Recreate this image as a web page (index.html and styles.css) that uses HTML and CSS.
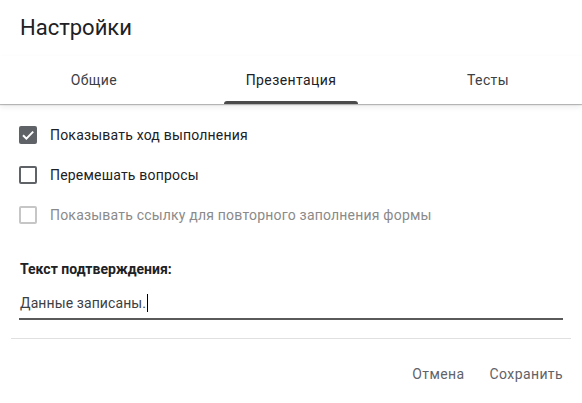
FILE: index.html
```html
<!DOCTYPE html>
<html lang="ru">
<head>
<meta charset="utf-8">
<title>Настройки</title>
<link rel="stylesheet" href="styles.css">
</head>
<body>
<div class="dialog">
  <div class="header">
    <h1 class="title">Настройки</h1>
  </div>
  <div class="tabs">
    <div class="tab"><div class="tab-inner"><span class="tab-label">Общие</span><span class="tab-ind"></span></div></div>
    <div class="tab active"><div class="tab-inner"><span class="tab-label">Презентация</span><span class="tab-ind"></span></div></div>
    <div class="tab"><div class="tab-inner"><span class="tab-label">Тесты</span><span class="tab-ind"></span></div></div>
  </div>
  <div class="content">
    <div class="row">
      <span class="cb checked"><svg viewBox="0 0 18 18" width="18" height="18"><path d="M4 9.2 L7.4 12.6 L14.2 5.6" fill="none" stroke="#fff" stroke-width="2"/></svg></span>
      <span class="row-label">Показывать ход выполнения</span>
    </div>
    <div class="row">
      <span class="cb"></span>
      <span class="row-label">Перемешать вопросы</span>
    </div>
    <div class="row disabled">
      <span class="cb"></span>
      <span class="row-label">Показывать ссылку для повторного заполнения формы</span>
    </div>
    <div class="field-label">Текст подтверждения:</div>
    <div class="field">Данные записаны.<span class="caret"></span></div>
  </div>
  <div class="sep"></div>
  <div class="actions">
    <button class="btn">Отмена</button>
    <button class="btn">Сохранить</button>
  </div>
</div>
</body>
</html>
```

FILE: styles.css
```css
* { box-sizing: border-box; }
html, body { margin: 0; padding: 0; background: #fff; }
body {
  font-family: Roboto, "Liberation Sans", sans-serif;
  color: #202124;
  width: 582px;
  height: 403px;
  overflow: hidden;
}
.header { padding: 14px 20px 0 20px; height: 56px; }
.title {
  margin: 0;
  font-size: 22px;
  line-height: 28px;
  font-weight: 400;
  color: #202124;
}
.tabs {
  display: grid;
  grid-template-columns: repeat(3, 197px);
  justify-content: center;
  height: 48px;
  box-shadow: 0 1px 1px rgba(0,0,0,0.25), 0 3px 6px rgba(0,0,0,0.08);
  position: relative;
}
.tab { display: flex; justify-content: center; }
.tab-inner {
  display: flex;
  flex-direction: column;
}
.tab-label {
  flex: 1;
  display: flex;
  align-items: center;
  padding: 2px 22px 0 22px;
  font-size: 14px;
  font-weight: 400;
  color: #3c4043;
  letter-spacing: 0.4px;
}
.tab-ind { height: 3px; border-radius: 3px 3px 0 0; }
.tab.active .tab-label { color: #202124; }
.tab.active .tab-ind { background: #4a4a4a; }
.content { padding: 11px 19px 0 19px; }
.row {
  display: flex;
  align-items: center;
  height: 40px;
  gap: 13px;
  font-size: 14px;
  letter-spacing: 0.2px;
}
.cb {
  width: 18px;
  height: 18px;
  border: 2px solid #5f6368;
  border-radius: 2px;
  display: flex;
  align-items: center;
  justify-content: center;
  flex: none;
}
.cb.checked { background: #5f6368; border: none; }
.row.disabled .cb { border-color: #c6c6c6; }
.row.disabled .row-label { color: #8a8a8a; }
.field-label {
  margin-top: 24px;
  padding-left: 1px;
  font-size: 14px;
  font-weight: 700;
  line-height: 20px;
  color: #202124;
}
.field {
  margin-top: 14px;
  font-size: 14px;
  line-height: 20px;
  padding: 0 0 5px 1px;
  border-bottom: 2px solid #5a5a5a;
  color: #3c4043;
  width: 544px;
  display: flex;
  align-items: center;
  letter-spacing: 0.1px;
}
.caret { display: inline-block; width: 1px; height: 18px; background: #000; margin-left: 1px; }
.sep { margin: 18px 11px 0 11px; height: 1px; background: #e0e0e0; }
.actions {
  display: flex;
  justify-content: flex-end;
  gap: 9px;
  padding: 17px 11px 0 0;
}
.btn {
  border: none;
  background: none;
  font-family: Roboto, "Liberation Sans", sans-serif;
  font-size: 14px;
  font-weight: 400;
  letter-spacing: 0.4px;
  color: #5f6368;
  height: 36px;
  padding: 0 8px;
}
```
